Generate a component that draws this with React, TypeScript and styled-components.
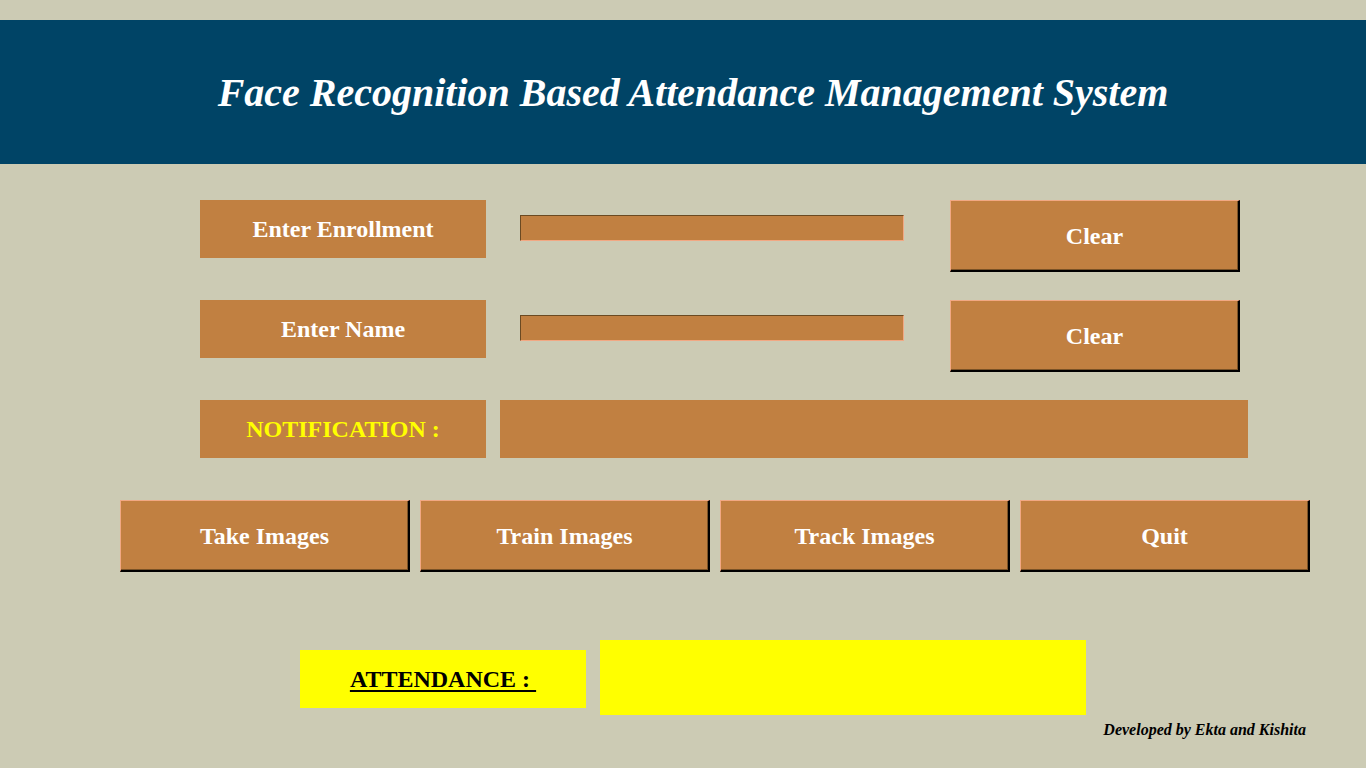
import React from "react";
import styled, { createGlobalStyle } from "styled-components";

const Global = createGlobalStyle`
  html, body { margin: 0; padding: 0; background: #cccbb4; }
  body { font-family: "Liberation Serif", "Times New Roman", serif; }
`;

const Page = styled.div`
  width: 1366px;
  height: 768px;
  background: #cccbb4;
  padding-top: 20px;
  box-sizing: border-box;
  overflow: hidden;
`;

const Header = styled.header`
  height: 144px;
  background: #004466;
  display: flex;
  align-items: center;
  justify-content: center;
`;

const Title = styled.h1`
  margin: 0;
  color: #ffffff;
  font-family: "Liberation Serif", serif;
  font-style: italic;
  font-weight: bold;
  font-size: 40px;
  padding-left: 20px;
  padding-top: 1px;
`;

const Row = styled.div<{ $top: number; $left: number; $gap?: number }>`
  display: flex;
  align-items: flex-start;
  margin-top: ${(p) => p.$top}px;
  padding-left: ${(p) => p.$left}px;
  gap: ${(p) => p.$gap ?? 0}px;
`;

const Label = styled.div<{ $color?: string; $bg?: string }>`
  width: 286px;
  height: 58px;
  background: ${(p) => p.$bg ?? "#c18041"};
  color: ${(p) => p.$color ?? "#ffffff"};
  display: flex;
  align-items: center;
  justify-content: center;
  font-weight: bold;
  font-size: 24px;
  flex-shrink: 0;
`;

const Entry = styled.div<{ $ml: number; $mr: number }>`
  width: 384px;
  height: 26px;
  margin-top: 15px;
  margin-left: ${(p) => p.$ml}px;
  margin-right: ${(p) => p.$mr}px;
  box-sizing: border-box;
  background: #c18041;
  border-top: 1px solid #6b4a22;
  border-left: 1px solid #6b4a22;
  border-right: 1px solid #f2a883;
  border-bottom: 1px solid #f2a883;
  flex-shrink: 0;
`;

const Button = styled.button`
  width: 290px;
  height: 72px;
  box-sizing: border-box;
  padding: 0;
  margin: 0;
  background: #c18041;
  color: #ffffff;
  font-family: "Liberation Serif", serif;
  font-weight: bold;
  font-size: 24px;
  border-top: 1px solid #f2a883;
  border-left: 1px solid #f2a883;
  border-right: 2px solid #000000;
  border-bottom: 2px solid #000000;
  box-shadow: inset -1px -1px 0 #7a5226;
  display: flex;
  align-items: center;
  justify-content: center;
  padding-top: 1px;
  flex-shrink: 0;
  cursor: pointer;
`;

const Message = styled.div<{ $w: number; $h: number; $bg: string; $ml: number }>`
  width: ${(p) => p.$w}px;
  height: ${(p) => p.$h}px;
  margin-left: ${(p) => p.$ml}px;
  background: ${(p) => p.$bg};
  flex-shrink: 0;
`;

const Underlined = styled.span`
  text-decoration: underline;
  text-decoration-thickness: 2px;
  text-underline-offset: 3px;
  white-space: pre;
`;

const AttendanceLabel = styled(Label)`
  margin-top: 10px;
  color: #000000;
  background: #ffff00;
`;

const Footer = styled.div`
  display: flex;
  justify-content: flex-end;
  padding-right: 60px;
  margin-top: 6px;
  font-style: italic;
  font-weight: bold;
  font-size: 16px;
  color: #000000;
`;

export default function App() {
  return (
    <Page>
      <Global />
      <Header>
        <Title>Face Recognition Based Attendance Management System</Title>
      </Header>

      <Row $top={36} $left={200}>
        <Label>Enter Enrollment</Label>
        <Entry $ml={34} $mr={46} />
        <Button>Clear</Button>
      </Row>

      <Row $top={28} $left={200}>
        <Label>Enter Name</Label>
        <Entry $ml={34} $mr={46} />
        <Button>Clear</Button>
      </Row>

      <Row $top={28} $left={200}>
        <Label $color="#ffff00">NOTIFICATION :</Label>
        <Message $w={748} $h={58} $bg="#c18041" $ml={14} />
      </Row>

      <Row $top={42} $left={120} $gap={10}>
        <Button>Take Images</Button>
        <Button>Train Images</Button>
        <Button>Track Images</Button>
        <Button>Quit</Button>
      </Row>

      <Row $top={68} $left={300}>
        <AttendanceLabel>
          <Underlined>ATTENDANCE : </Underlined>
        </AttendanceLabel>
        <Message $w={486} $h={75} $bg="#ffff00" $ml={14} />
      </Row>

      <Footer>Developed by Ekta and Kishita</Footer>
    </Page>
  );
}
